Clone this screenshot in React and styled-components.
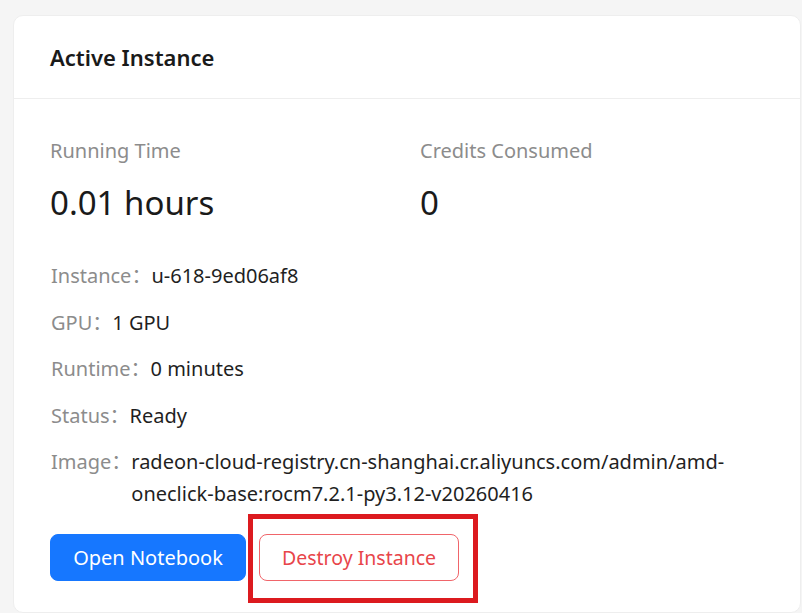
import React from "react";
import styled, { createGlobalStyle } from "styled-components";

const GlobalStyle = createGlobalStyle`
  body {
    margin: 0;
    background: #f5f5f5;
    font-family: "Noto Sans", "Noto Sans CJK SC", sans-serif;
    color: #1f1f1f;
  }
`;

const details = [
  { label: "Instance", value: "u-618-9ed06af8" },
  { label: "GPU", value: "1 GPU" },
  { label: "Runtime", value: "0 minutes" },
  { label: "Status", value: "Ready" },
  {
    label: "Image",
    value:
      "radeon-cloud-registry.cn-shanghai.cr.aliyuncs.com/admin/amd-oneclick-base:rocm7.2.1-py3.12-v20260416",
  },
];

function App() {
  return (
    <Page>
      <GlobalStyle />
      <Card>
        <CardHead>Active Instance</CardHead>
        <CardBody>
          <Stats>
            <Stat>
              <StatTitle>Running Time</StatTitle>
              <StatValue>0.01 hours</StatValue>
            </Stat>
            <Stat>
              <StatTitle>Credits Consumed</StatTitle>
              <StatValue>0</StatValue>
            </Stat>
          </Stats>
          <DetailList>
            {details.map((d) => (
              <DetailRow key={d.label}>
                <Label>{d.label}：</Label>
                <Value>{d.value}</Value>
              </DetailRow>
            ))}
          </DetailList>
          <Actions>
            <PrimaryButton>Open Notebook</PrimaryButton>
            <Highlight>
              <DangerButton>Destroy Instance</DangerButton>
            </Highlight>
          </Actions>
        </CardBody>
      </Card>
    </Page>
  );
}

const Page = styled.div`
  padding: 15px 1px 0 13px;
`;

const Card = styled.div`
  background: #fff;
  border: 1px solid #eeeeee;
  border-radius: 10px;
  min-height: 596px;
`;

const CardHead = styled.div`
  height: 82px;
  display: flex;
  align-items: center;
  padding: 0 36px;
  font-size: 22px;
  font-weight: 600;
  color: #1a1a1a;
  border-bottom: 1px solid #eeeeee;
`;

const CardBody = styled.div`
  padding: 36px 36px 0 36px;
`;

const Stats = styled.div`
  display: grid;
  grid-template-columns: 370px 1fr;
`;

const Stat = styled.div`
  display: flex;
  flex-direction: column;
`;

const StatTitle = styled.div`
  font-size: 20px;
  line-height: 32px;
  color: #8c8c8c;
`;

const StatValue = styled.div`
  font-size: 33px;
  line-height: 44px;
  margin-top: 14px;
  color: #1a1a1a;
`;

const DetailList = styled.div`
  display: flex;
  flex-direction: column;
  gap: 14.5px;
  margin-top: 35px;
  padding-left: 1px;
`;

const DetailRow = styled.div`
  display: flex;
  font-size: 20px;
  line-height: 32px;
`;

const Label = styled.span`
  flex: none;
  color: #8c8c8c;
`;

const Value = styled.span`
  color: #1f1f1f;
  overflow-wrap: anywhere;
`;

const Actions = styled.div`
  display: flex;
  gap: 13px;
  margin-top: 24px;
`;

const BaseButton = styled.button`
  height: 47px;
  padding: 0;
  border-radius: 8px;
  font-family: inherit;
  font-size: 20px;
  white-space: nowrap;
  cursor: pointer;
`;

const PrimaryButton = styled(BaseButton)`
  width: 196px;
  background: #1677ff;
  border: 1px solid #1677ff;
  color: #fff;
`;

const DangerButton = styled(BaseButton)`
  width: 200px;
  background: #fff;
  border: 1px solid #f0656a;
  color: #e8454a;
  font-size: 19.5px;
`;

const Highlight = styled.div`
  position: relative;

  &::after {
    content: "";
    position: absolute;
    left: -11px;
    right: -19px;
    top: -20px;
    bottom: -22px;
    border: 5px solid #dc1a1f;
    pointer-events: none;
  }
`;

export default App;
